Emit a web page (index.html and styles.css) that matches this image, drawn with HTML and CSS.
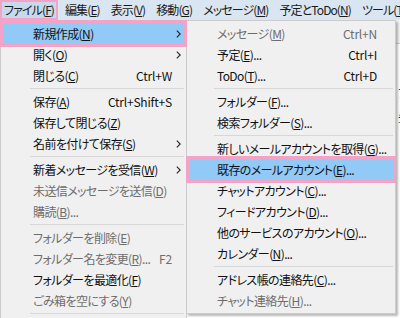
FILE: index.html
```html
<!DOCTYPE html>
<html lang="ja">
<head>
<meta charset="utf-8">
<title>Thunderbird ファイルメニュー</title>
<link rel="stylesheet" href="styles.css">
</head>
<body>
<div class="app">
  <div class="menubar">
    <span class="mb-item active">ファイル(<u>F</u>)</span>
    <span class="mb-item">編集(<u>E</u>)</span>
    <span class="mb-item">表示(<u>V</u>)</span>
    <span class="mb-item">移動(<u>G</u>)</span>
    <span class="mb-item">メッセージ(<u>M</u>)</span>
    <span class="mb-item">予定とToDo(<u>N</u>)</span>
    <span class="mb-item">ツール(<u>T</u>)</span>
  </div>
  <div class="workspace">
    <div class="toolbar"></div>
    <div class="list">
      <div class="list-row">ア</div>
      <div class="list-row">先</div>
    </div>
  </div>

  <div class="menu menu-main">
    <div class="item hl"><span class="label">新規作成(<u>N</u>)</span><span class="key"></span><span class="arrow"><svg width="5" height="8" viewBox="0 0 5 8"><polyline points="0.8,0.6 4.2,4 0.8,7.4" fill="none" stroke="#222" stroke-width="1.1"/></svg></span></div>
    <div class="item"><span class="label">開く(<u>O</u>)</span><span class="key"></span><span class="arrow"><svg width="5" height="8" viewBox="0 0 5 8"><polyline points="0.8,0.6 4.2,4 0.8,7.4" fill="none" stroke="#222" stroke-width="1.1"/></svg></span></div>
    <div class="item"><span class="label">閉じる(<u>C</u>)</span><span class="key">Ctrl+W</span><span class="arrow"></span></div>
    <div class="sep"></div>
    <div class="item"><span class="label">保存(<u>A</u>)</span><span class="key">Ctrl+Shift+S</span><span class="arrow"></span></div>
    <div class="item"><span class="label">保存して閉じる(<u>Z</u>)</span><span class="key"></span><span class="arrow"></span></div>
    <div class="item"><span class="label">名前を付けて保存(<u>S</u>)</span><span class="key"></span><span class="arrow"><svg width="5" height="8" viewBox="0 0 5 8"><polyline points="0.8,0.6 4.2,4 0.8,7.4" fill="none" stroke="#222" stroke-width="1.1"/></svg></span></div>
    <div class="sep"></div>
    <div class="item"><span class="label">新着メッセージを受信(<u>W</u>)</span><span class="key"></span><span class="arrow"><svg width="5" height="8" viewBox="0 0 5 8"><polyline points="0.8,0.6 4.2,4 0.8,7.4" fill="none" stroke="#222" stroke-width="1.1"/></svg></span></div>
    <div class="item disabled"><span class="label">未送信メッセージを送信(<u>D</u>)</span><span class="key"></span><span class="arrow"></span></div>
    <div class="item disabled"><span class="label">購読(<u>B</u>)...</span><span class="key"></span><span class="arrow"></span></div>
    <div class="sep"></div>
    <div class="item disabled"><span class="label">フォルダーを削除(<u>E</u>)</span><span class="key"></span><span class="arrow"></span></div>
    <div class="item disabled"><span class="label">フォルダー名を変更(<u>R</u>)...</span><span class="key">F2</span><span class="arrow"></span></div>
    <div class="item"><span class="label">フォルダーを最適化(<u>F</u>)</span><span class="key"></span><span class="arrow"></span></div>
    <div class="item disabled"><span class="label">ごみ箱を空にする(<u>Y</u>)</span><span class="key"></span><span class="arrow"></span></div>
    <div class="sep"></div>
    <div class="item"><span class="label">印刷(<u>P</u>)...</span><span class="key">Ctrl+P</span><span class="arrow"></span></div>
  </div>

  <div class="menu menu-sub">
    <div class="item disabled"><span class="label">メッセージ(<u>M</u>)</span><span class="key">Ctrl+N</span><span class="arrow"></span></div>
    <div class="item"><span class="label">予定(<u>E</u>)...</span><span class="key">Ctrl+I</span><span class="arrow"></span></div>
    <div class="item"><span class="label">ToDo(<u>T</u>)...</span><span class="key">Ctrl+D</span><span class="arrow"></span></div>
    <div class="sep"></div>
    <div class="item"><span class="label">フォルダー(<u>F</u>)...</span><span class="key"></span><span class="arrow"></span></div>
    <div class="item"><span class="label">検索フォルダー(<u>S</u>)...</span><span class="key"></span><span class="arrow"></span></div>
    <div class="sep"></div>
    <div class="item"><span class="label">新しいメールアカウントを取得(<u>G</u>)...</span><span class="key"></span><span class="arrow"></span></div>
    <div class="item hl"><span class="label">既存のメールアカウント(<u>E</u>)...</span><span class="key"></span><span class="arrow"></span></div>
    <div class="item"><span class="label">チャットアカウント(<u>C</u>)...</span><span class="key"></span><span class="arrow"></span></div>
    <div class="item"><span class="label">フィードアカウント(<u>D</u>)...</span><span class="key"></span><span class="arrow"></span></div>
    <div class="item"><span class="label">他のサービスのアカウント(<u>O</u>)...</span><span class="key"></span><span class="arrow"></span></div>
    <div class="item"><span class="label">カレンダー(<u>N</u>)...</span><span class="key"></span><span class="arrow"></span></div>
    <div class="sep"></div>
    <div class="item"><span class="label">アドレス帳の連絡先(<u>C</u>)...</span><span class="key"></span><span class="arrow"></span></div>
    <div class="item disabled"><span class="label">チャット連絡先(<u>H</u>)...</span><span class="key"></span><span class="arrow"></span></div>
  </div>
</div>
</body>
</html>
```

FILE: styles.css
```css
* { box-sizing: border-box; }

html, body {
  margin: 0;
  padding: 0;
  background: #ffffff;
}

body {
  font-family: "Noto Sans CJK JP", sans-serif;
  font-size: 12px;
  color: #000;
  font-feature-settings: "palt";
  letter-spacing: -0.6px;
  overflow: hidden;
}

u {
  text-decoration: underline;
  text-underline-offset: 1px;
  text-decoration-thickness: 1px;
}

.app {
  position: relative;
  width: 400px;
  height: 318px;
  overflow: hidden;
}

/* menu bar */
.menubar {
  display: flex;
  height: 20px;
  background: #d9e5f1;
  gap: 3px;
  white-space: nowrap;
  overflow: hidden;
}

.mb-item {
  flex: none;
  height: 20px;
  line-height: 20px;
  padding: 0 4px;
  color: #1a1a1a;
  letter-spacing: -0.9px;
}

.mb-item.active {
  background: #c8d9eb;
  box-shadow: inset 0 0 0 2px #f3a4c6;
}

/* underlying application */
.workspace {
  height: 298px;
  background: #fff;
}

.toolbar {
  height: 24px;
  background: #f2f2f2;
  border-bottom: 1px solid #d0d0d0;
}

.list {
  padding-left: 398px;
  padding-top: 40px;
}

.list-row {
  height: 24px;
  color: #333;
}

/* popup menus */
.menu {
  position: absolute;
  top: 20px;
  background: #f0f0f0;
  border: 1px solid #cccccc;
  padding: 2px;
}

.menu-main {
  left: 0;
  width: 187px;
  height: 330px;
}

.menu-sub {
  left: 186px;
  width: 210px;
  box-shadow: 2px 2px 2px rgba(0, 0, 0, 0.28);
}

.item {
  display: grid;
  grid-template-columns: 1fr auto 12px;
  align-items: center;
  height: 21px;
  line-height: 21px;
  padding-left: 30px;
  white-space: nowrap;
  color: #111;
}

.menu-sub .item {
  grid-template-columns: 1fr auto 16px;
  padding-left: 28px;
}

.item.disabled {
  color: #6d6d6d;
}

.item .key {
  text-align: right;
  letter-spacing: -0.2px;
}

.item .arrow {
  display: flex;
  justify-content: center;
  align-items: center;
  height: 21px;
}

.item.hl {
  background: #91c9f7;
  outline: 3px solid #f3a4c6;
  position: relative;
  z-index: 5;
}

.sep {
  height: 1px;
  margin: 2px 0 2px 27px;
  background: #d7d7d7;
}

.menu-sub .sep {
  margin-left: 25px;
}
```
